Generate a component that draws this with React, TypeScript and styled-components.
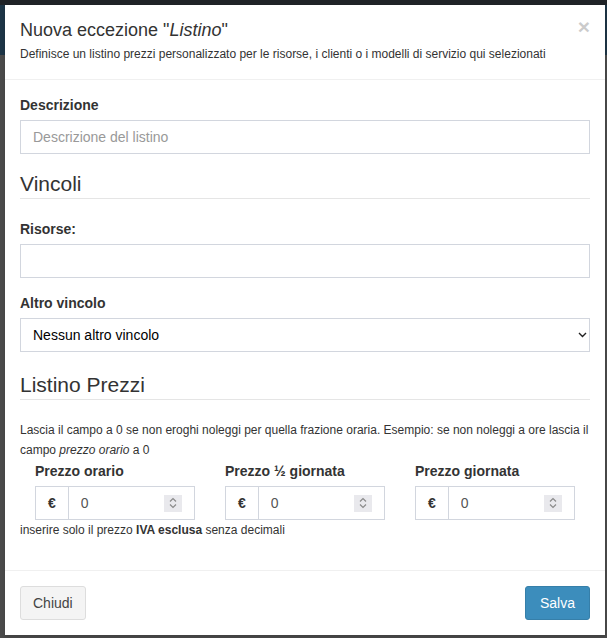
import React from 'react';
import styled, {createGlobalStyle} from 'styled-components';

const GlobalStyle = createGlobalStyle`
    * {
        box-sizing: border-box;
    }
    body {
        margin: 0;
        font-family: "Liberation Sans", Arial, sans-serif;
        font-size: 14px;
        line-height: 20px;
        color: #333;
        background: #4a4a4a;
    }
`;

const prices = ['Prezzo orario', 'Prezzo ½ giornata', 'Prezzo giornata'];

const SpinIcon = () => (
    <svg width="8" height="12" viewBox="0 0 8 12" fill="none" stroke="#8a8a8a" strokeWidth="1.2">
        <path d="M1 4.5 L4 1.5 L7 4.5"/>
        <path d="M1 7.5 L4 10.5 L7 7.5"/>
    </svg>
);

const ChevronDown = () => (
    <svg width="9" height="6" viewBox="0 0 9 6" fill="none" stroke="#222" strokeWidth="1.4">
        <path d="M1 1 L4.5 4.5 L8 1"/>
    </svg>
);

export default function App() {
    return (
        <Backdrop>
            <GlobalStyle/>
            <Modal>
                <Header>
                    <HeaderText>
                        <Title>Nuova eccezione "<em>Listino</em>"</Title>
                        <Subtitle>Definisce un listino prezzi personalizzato per le risorse, i clienti o i modelli di servizio qui selezionati</Subtitle>
                    </HeaderText>
                    <CloseButton type="button">×</CloseButton>
                </Header>
                <Body>
                    <FormGroup>
                        <Label>Descrizione</Label>
                        <TextInput type="text" placeholder="Descrizione del listino"/>
                    </FormGroup>
                    <Legend>Vincoli</Legend>
                    <FormGroup>
                        <Label>Risorse:</Label>
                        <TextInput type="text"/>
                    </FormGroup>
                    <FormGroup>
                        <Label>Altro vincolo</Label>
                        <SelectWrap>
                            <Select defaultValue="none">
                                <option value="none">Nessun altro vincolo</option>
                            </Select>
                            <SelectArrow><ChevronDown/></SelectArrow>
                        </SelectWrap>
                    </FormGroup>
                    <Legend $top={3}>Listino Prezzi</Legend>
                    <Hint>
                        Lascia il campo a 0 se non eroghi noleggi per quella frazione oraria. Esempio: se non noleggi a ore lascia il campo <em>prezzo orario</em> a 0
                    </Hint>
                    <PriceRow>
                        {prices.map((p) => (
                            <PriceCol key={p}>
                                <Label>{p}</Label>
                                <InputGroup>
                                    <Addon>€</Addon>
                                    <NumberField>
                                        <NumberInput type="text" size={1} defaultValue="0"/>
                                        <Spinner><SpinIcon/></Spinner>
                                    </NumberField>
                                </InputGroup>
                            </PriceCol>
                        ))}
                    </PriceRow>
                    <HelpText>inserire solo il prezzo <strong>IVA esclusa</strong> senza decimali</HelpText>
                </Body>
                <Footer>
                    <Button type="button">Chiudi</Button>
                    <Button type="button" $primary>Salva</Button>
                </Footer>
            </Modal>
        </Backdrop>
    );
}

const Backdrop = styled.div`
    height: 638px;
    overflow: hidden;
    padding: 5px 2px 0 5px;
    background:
        linear-gradient(#1f2327, #1f2327) top left / 100% 5px no-repeat,
        linear-gradient(#1d3546, #1d3546) 0 5px / 100% 50px no-repeat,
        #4a4a4a;
`;

const Modal = styled.div`
    width: 600px;
    background: #fff;
    box-shadow: 0 2px 3px rgba(0, 0, 0, 0.125);
`;

const Header = styled.div`
    display: flex;
    align-items: flex-start;
    justify-content: space-between;
    padding: 15px;
    border-bottom: 1px solid #f0f0f0;
`;

const HeaderText = styled.div`
    display: flex;
    flex-direction: column;
`;

const Title = styled.h4`
    margin: 0;
    font-size: 18px;
    font-weight: 400;
    line-height: 20px;
    color: #333;
`;

const Subtitle = styled.small`
    margin-top: 4px;
    font-size: 12px;
    line-height: 20px;
    color: #333;
`;

const CloseButton = styled.button`
    margin-top: -4px;
    padding: 0;
    border: 0;
    background: transparent;
    font-family: inherit;
    font-size: 21px;
    font-weight: 700;
    line-height: 1;
    color: #000;
    opacity: 0.2;
`;

const Body = styled.div`
    padding: 15px;
`;

const FormGroup = styled.div`
    margin-bottom: 15px;
`;

const Label = styled.label`
    display: inline-block;
    margin-bottom: 5px;
    font-weight: 700;
`;

const TextInput = styled.input`
    display: block;
    width: 100%;
    height: 34px;
    padding: 6px 12px;
    border: 1px solid #d2d6de;
    border-radius: 0;
    font-family: inherit;
    font-size: 14px;
    color: #555;
    background: #fff;
    outline: none;

    &::placeholder {
        color: #999;
    }
`;

const SelectWrap = styled.div`
    position: relative;
`;

const Select = styled.select`
    display: block;
    width: 100%;
    height: 34px;
    padding: 6px 12px;
    border: 1px solid #d2d6de;
    border-radius: 0;
    appearance: none;
    background: #fff;
    font-family: inherit;
    font-size: 14px;
    color: #000;
    outline: none;
`;

const SelectArrow = styled.span`
    position: absolute;
    top: 14px;
    right: 3px;
    display: flex;
    pointer-events: none;
`;

const Legend = styled.div<{$top?: number}>`
    padding-top: ${({$top}) => $top ?? 0}px;
    margin-bottom: 20px;
    font-size: 21px;
    line-height: 29px;
    color: #333;
    border-bottom: 1px solid #e5e5e5;
`;

const Hint = styled.p`
    margin: 0 0 1px;
    font-size: 12px;
    line-height: 20px;
`;

const PriceRow = styled.div`
    display: grid;
    grid-template-columns: repeat(3, minmax(0, 1fr));
`;

const PriceCol = styled.div`
    min-width: 0;
    padding: 0 15px;
`;

const InputGroup = styled.div`
    display: flex;
    height: 34px;
`;

const Addon = styled.span`
    display: flex;
    align-items: center;
    padding: 6px 12px;
    border: 1px solid #d2d6de;
    border-right: 0;
    font-weight: 700;
    color: #333;
`;

const NumberField = styled.div`
    flex: 1;
    min-width: 0;
    display: flex;
    align-items: center;
    padding: 0 12px;
    border: 1px solid #d2d6de;
`;

const NumberInput = styled.input`
    flex: 1;
    width: 0;
    min-width: 0;
    padding: 0;
    border: 0;
    font-family: inherit;
    font-size: 14px;
    color: #555;
    outline: none;
`;

const Spinner = styled.span`
    display: flex;
    align-items: center;
    justify-content: center;
    width: 18px;
    height: 17px;
    background: #e9e9ed;
`;

const HelpText = styled.div`
    margin-bottom: 15px;
    font-size: 12px;
    line-height: 20px;
`;

const Footer = styled.div`
    display: flex;
    justify-content: space-between;
    padding: 15px;
    border-top: 1px solid #f0f0f0;
`;

const Button = styled.button<{$primary?: boolean}>`
    height: 34px;
    padding: 6px ${({$primary}) => ($primary ? '14px' : '12px')};
    border: 1px solid ${({$primary}) => ($primary ? '#367fa9' : '#ddd')};
    border-radius: 3px;
    background: ${({$primary}) => ($primary ? '#3c8dbc' : '#f4f4f4')};
    color: ${({$primary}) => ($primary ? '#fff' : '#444')};
    font-family: inherit;
    font-size: 14px;
    line-height: 20px;
`;
